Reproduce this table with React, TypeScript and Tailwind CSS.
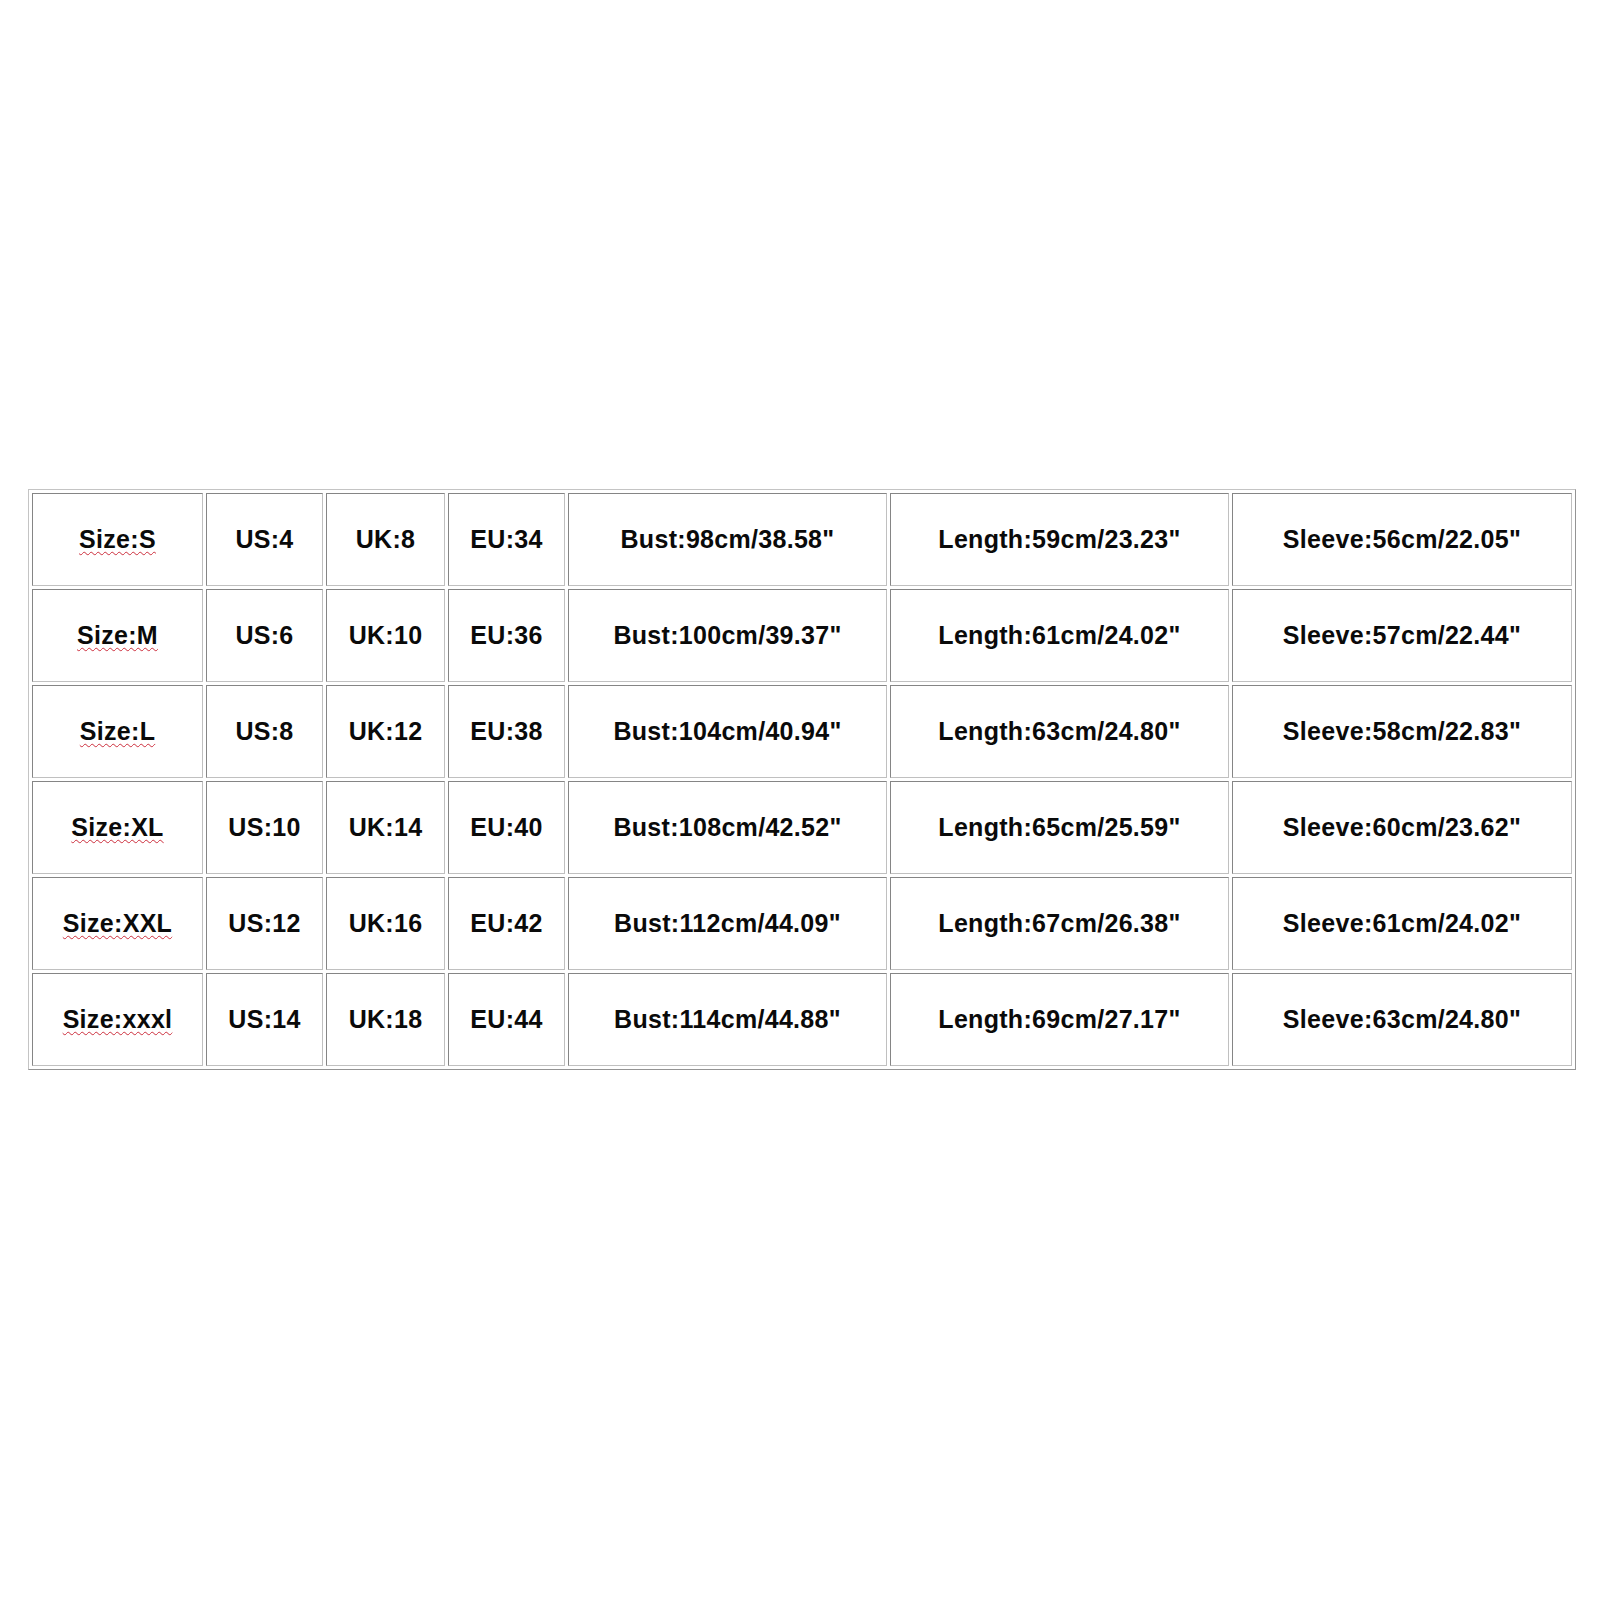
const rows = [
  ["Size:S", "US:4", "UK:8", "EU:34", "Bust:98cm/38.58\"", "Length:59cm/23.23\"", "Sleeve:56cm/22.05\""],
  ["Size:M", "US:6", "UK:10", "EU:36", "Bust:100cm/39.37\"", "Length:61cm/24.02\"", "Sleeve:57cm/22.44\""],
  ["Size:L", "US:8", "UK:12", "EU:38", "Bust:104cm/40.94\"", "Length:63cm/24.80\"", "Sleeve:58cm/22.83\""],
  ["Size:XL", "US:10", "UK:14", "EU:40", "Bust:108cm/42.52\"", "Length:65cm/25.59\"", "Sleeve:60cm/23.62\""],
  ["Size:XXL", "US:12", "UK:16", "EU:42", "Bust:112cm/44.09\"", "Length:67cm/26.38\"", "Sleeve:61cm/24.02\""],
  ["Size:xxxl", "US:14", "UK:18", "EU:44", "Bust:114cm/44.88\"", "Length:69cm/27.17\"", "Sleeve:63cm/24.80\""],
];

// one cell of the old-style html table (inset border)
const Cell = ({ text, first }: { text: string; first: boolean }) => (
  <div className="flex items-center justify-center border border-t-[#858585] border-l-[#858585] border-b-[#c0c0c0] border-r-[#c0c0c0] bg-white">
    <span
      className={
        first
          ? "underline decoration-wavy decoration-[#cc2e3c] decoration-1 underline-offset-[3px]"
          : ""
      }
    >
      {text}
    </span>
  </div>
);

export default function App() {
  return (
    <div className="w-[1600px] h-[1600px] bg-white pt-[489px] pl-[28px] font-['Liberation_Sans',Arial,sans-serif] font-bold text-[25px] tracking-[0.3px] text-[#0a0a0a]">
      {/* outer table frame */}
      <div className="w-[1548px] border border-t-[#c4c4c4] border-l-[#c4c4c4] border-b-[#949494] border-r-[#949494] p-[3px]">
        <div className="grid grid-cols-[171px_117px_119px_117px_319px_339px_340px] auto-rows-[93px] gap-[3px]">
          {rows.map((r, i) =>
            r.map((t, j) => <Cell key={`${i}-${j}`} text={t} first={j === 0} />)
          )}
        </div>
      </div>
    </div>
  );
}
